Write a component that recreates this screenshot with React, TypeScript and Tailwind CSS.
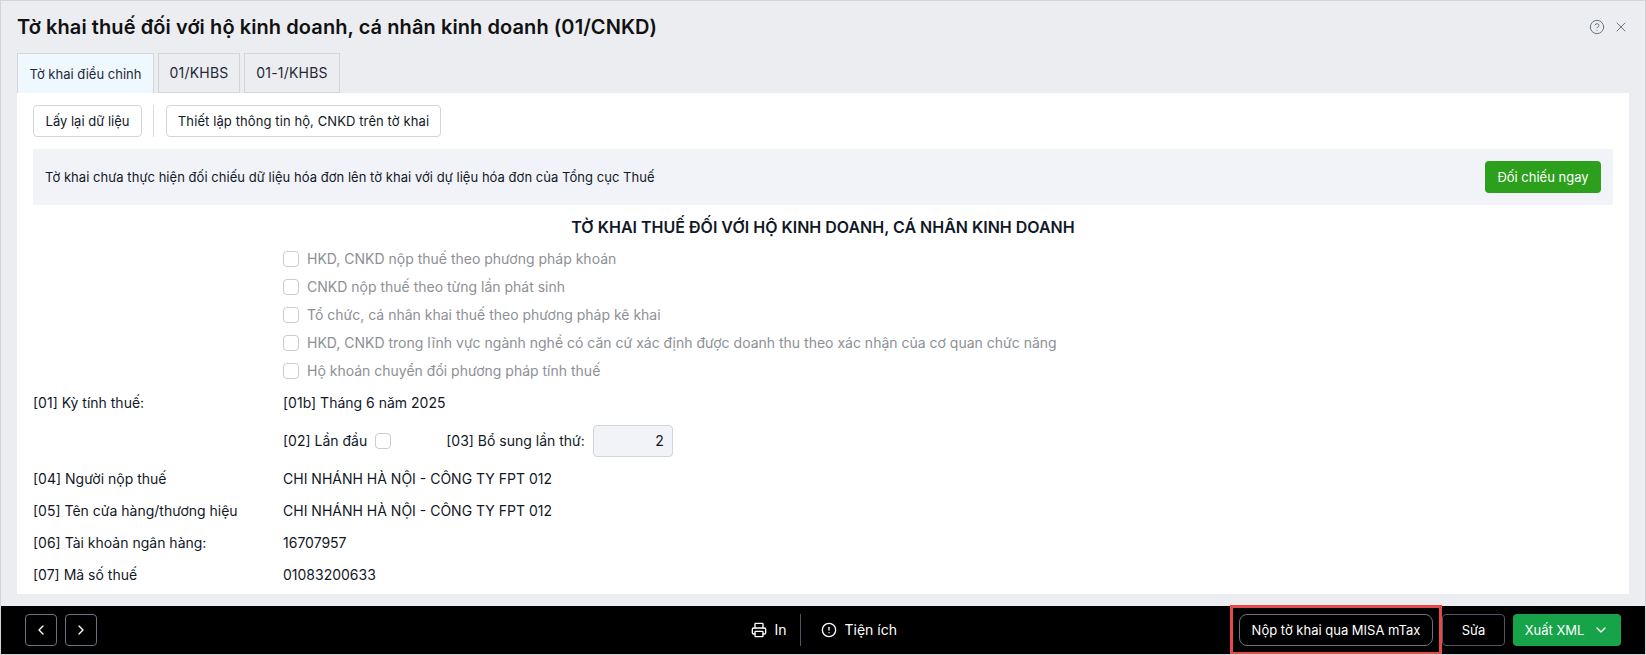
import { ChevronDown, ChevronLeft, ChevronRight, CircleAlert, CircleHelp, Printer, X } from "lucide-react";

const checks = [
  "HKD, CNKD nộp thuế theo phương pháp khoán",
  "CNKD nộp thuế theo từng lần phát sinh",
  "Tổ chức, cá nhân khai thuế theo phương pháp kê khai",
  "HKD, CNKD trong lĩnh vực ngành nghề có căn cứ xác định được doanh thu theo xác nhận của cơ quan chức năng",
  "Hộ khoán chuyển đổi phương pháp tính thuế",
];

const infoRows = [
  ["[04] Người nộp thuế", "CHI NHÁNH HÀ NỘI - CÔNG TY FPT 012"],
  ["[05] Tên cửa hàng/thương hiệu", "CHI NHÁNH HÀ NỘI - CÔNG TY FPT 012"],
  ["[06] Tài khoản ngân hàng:", "16707957"],
  ["[07] Mã số thuế", "01083200633"],
];

function Box() {
  return <span className="block w-4 h-4 shrink-0 rounded-[4px] border border-[#c9ccd3] bg-white" />;
}

export default function App() {
  return (
    <div className="w-[1646px] h-[655px] overflow-hidden flex flex-col bg-[#ecedf1] border-t border-t-[#d4d5d8] border-x border-x-[#d4d5d8] border-b border-b-[#d4d5d8] text-[13px] leading-[18px] text-[#111827] font-['Inter','Noto_Sans',sans-serif]">
      <header className="h-[52px] shrink-0 flex items-center justify-between pl-4 pr-4">
        <h1 className="text-[20px] leading-[28px] font-semibold text-[#111] tracking-[0.08px]">
          Tờ khai thuế đối với hộ kinh doanh, cá nhân kinh doanh (01/CNKD)
        </h1>
        <div className="flex items-center gap-2 text-[#6b7280]">
          <CircleHelp size={16} strokeWidth={1.5} />
          <X size={16} strokeWidth={1.5} />
        </div>
      </header>

      <div className="h-10 shrink-0 flex gap-1 pl-4 text-[#1f2937]">
        <div className="w-[137px] flex items-center justify-center border border-b-0 border-[#d4d5d8] bg-[#eff8fe]">Tờ khai điều chỉnh</div>
        <div className="w-[82px] flex items-center justify-center border border-[#d4d5d8] bg-[#ecedf1] text-[14px] tracking-[0.2px]">01/KHBS</div>
        <div className="w-[96px] flex items-center justify-center border border-[#d4d5d8] bg-[#ecedf1] text-[14px] tracking-[0.2px]">01-1/KHBS</div>
      </div>

      <main className="ml-4 mr-4 h-[501px] shrink-0 bg-white px-4 pt-3 overflow-hidden text-[14px]">
        <div className="flex items-center h-8 text-[13px]">
          <button className="h-8 w-[109px] rounded border border-[#d1d5db] bg-white">Lấy lại dữ liệu</button>
          <div className="w-px h-8 bg-[#dcdee3] ml-[11px] mr-3" />
          <button className="h-8 w-[275px] rounded border border-[#d1d5db] bg-white tracking-[0.1px]">Thiết lập thông tin hộ, CNKD trên tờ khai</button>
        </div>

        <div className="mt-3 h-14 flex items-center justify-between pl-3 pr-3 bg-[#f2f3f8] text-[13px]">
          <span className="tracking-[0.04px]">Tờ khai chưa thực hiện đối chiếu dữ liệu hóa đơn lên tờ khai với dự liệu hóa đơn của Tổng cục Thuế</span>
          <button className="h-8 w-[116px] rounded bg-[#2ca01c] text-white">Đối chiếu ngay</button>
        </div>

        <h2 className="mt-3 text-center text-[16px] leading-5 font-semibold">TỜ KHAI THUẾ ĐỐI VỚI HỘ KINH DOANH, CÁ NHÂN KINH DOANH</h2>

        <div className="mt-[13px] pl-[250px] flex flex-col gap-[10px] text-[#8d9096]">
          {checks.map((c) => (
            <label key={c} className="flex items-center gap-2 h-[18px]">
              <Box />
              {c}
            </label>
          ))}
        </div>

        <div className="mt-3 flex h-[22px] items-center">
          <span className="w-[250px]">[01] Kỳ tính thuế:</span>
          <span>[01b] Tháng 6 năm 2025</span>
        </div>

        <div className="mt-[11px] flex h-8 items-center pl-[250px]">
          <span>[02] Lần đầu</span>
          <span className="ml-2"><Box /></span>
          <span className="ml-[55px]">[03] Bổ sung lần thứ:</span>
          <div className="ml-2 w-20 h-8 flex items-center justify-end pr-2 rounded border border-[#d1d5db] bg-[#f2f3f8]">2</div>
        </div>

        <div className="mt-[13px] flex flex-col gap-[14px]">
          {infoRows.map(([label, value]) => (
            <div key={label} className="flex h-[18px] items-center">
              <span className="w-[250px]">{label}</span>
              <span>{value}</span>
            </div>
          ))}
        </div>
      </main>

      <footer className="mt-3 -mx-px h-12 shrink-0 bg-black text-white flex items-center pl-[25px] pr-[25px]">
        <div className="flex gap-2 flex-1">
          <button className="w-8 h-8 flex items-center justify-center rounded border border-[#6b7280]"><ChevronLeft size={16} /></button>
          <button className="w-8 h-8 flex items-center justify-center rounded border border-[#6b7280]"><ChevronRight size={16} /></button>
        </div>

        <div className="flex items-center mr-[342px] text-[14px]">
          <Printer size={16} strokeWidth={2} />
          <span className="ml-2">In</span>
          <div className="w-px h-8 bg-[#4b5563] ml-[13px] mr-[20px]" />
          <CircleAlert size={16} strokeWidth={2} />
          <span className="ml-2">Tiện ích</span>
        </div>

        <div className="relative">
          <button className="w-[194px] h-8 rounded-lg border border-[#6b7280]">Nộp tờ khai qua MISA mTax</button>
          <div className="absolute -left-[9px] -right-[9px] -top-[9px] -bottom-[9px] border-[3px] border-[#e5484d] pointer-events-none" />
        </div>
        <button className="ml-[9px] w-[63px] h-8 rounded border border-[#4b5563]">Sửa</button>
        <button className="ml-2 w-[108px] h-8 rounded bg-[#16a34a] flex items-center justify-center gap-[9px]">
          Xuất XML
          <ChevronDown size={16} />
        </button>
      </footer>
    </div>
  );
}
